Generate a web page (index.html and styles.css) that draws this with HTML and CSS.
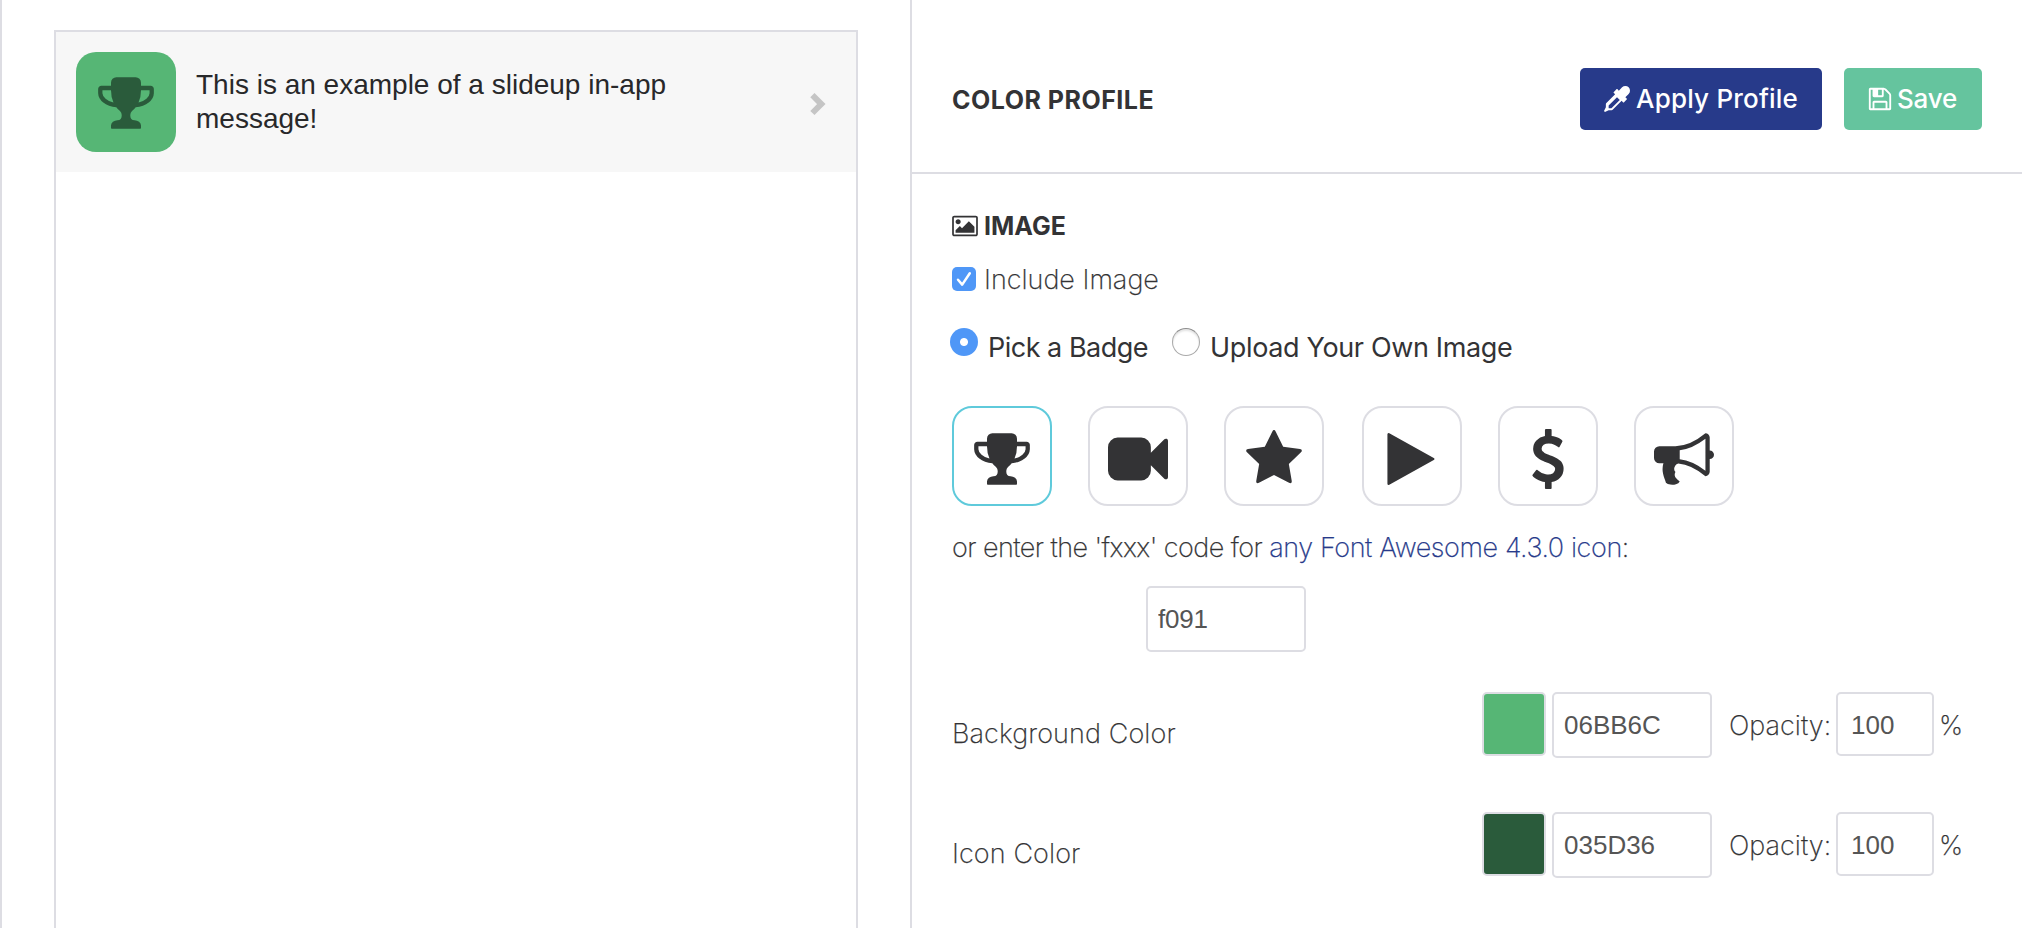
FILE: index.html
```html
<!DOCTYPE html>
<html lang="en">
<head>
<meta charset="utf-8">
<title>In-App Message Composer</title>
<link rel="stylesheet" href="styles.css">
</head>
<body>
<svg class="sprite" aria-hidden="true">
  <symbol id="trophy" viewBox="0 0 1792 1792"><path d="M522 883q-74-162-74-371h-256v96q0 78 94.500 162t235.500 113zm1078-275v-96h-256q0 209-74 371 141-29 235.500-113t94.500-162zm128-128v128q0 71-41.500 143t-112 130-173 97.500-215.500 44.500q-42 54-95 95-38 34-52.500 72.500t-14.500 89.500q0 54 30.500 91t97.500 37q75 0 133.500 45.500t58.500 114.500v64q0 14-9 23t-23 9h-832q-14 0-23-9t-9-23v-64q0-69 58.500-114.500t133.500-45.500q67 0 97.500-37t30.500-91q0-51-14.500-89.500t-52.500-72.500q-53-41-95-95-113-5-215.500-44.500t-173-97.500-112-130-41.500-143v-128q0-40 28-68t68-28h288v-96q0-66 47-113t113-47h576q66 0 113 47t47 113v96h288q40 0 68 28t28 68z"/></symbol>
</svg>
<div class="composer">
  <section class="preview">
    <div class="preview-frame">
      <div class="slideup">
        <div class="slideup-badge"><svg class="badge-icon"><use href="#trophy"/></svg></div>
        <p class="slideup-text">This is an example of a slideup in-app message!</p>
        <svg class="slideup-chevron" viewBox="0 0 18 26"><path d="M3.400 4.200 12.300 13.100 3.400 22"/></svg>
      </div>
    </div>
  </section>
  <section class="settings">
    <header class="profile">
      <h2 class="heading profile-title">COLOR PROFILE</h2>
      <button class="btn btn-apply" type="button">
        <svg class="btn-icon" viewBox="0 0 1792 1792"><path d="M1698 94q94 94 94 226.500t-94 225.500l-225 223 104 104q10 10 10 23t-10 23l-210 210q-10 10-23 10t-23-10l-105-105-603 603q-37 37-90 37h-203l-256 128-64-64 128-256v-203q0-53 37-90l603-603-105-105q-10-10-10-23t10-23l210-210q10-10 23-10t23 10l104 104 223-225q93-94 225.500-94t226.500 94zm-1186 1442l576-576-192-192-576 576v192h192z"/></svg>
        <span class="apply-label">Apply Profile</span>
      </button>
      <button class="btn btn-save" type="button">
        <svg class="btn-icon" viewBox="0 0 1792 1792"><path d="M512 1536h768v-384h-768v384zm896 0h128v-896q0-14-10-38.500t-20-34.500l-281-281q-10-10-34-20t-39-10v416q0 40-28 68t-68 28h-576q-40 0-68-28t-28-68v-416h-128v1280h128v-416q0-40 28-68t68-28h832q40 0 68 28t28 68v416zm-384-928v-320q0-13-9.500-22.500t-22.500-9.500h-192q-13 0-22.500 9.500t-9.500 22.500v320q0 13 9.500 22.500t22.500 9.500h192q13 0 22.500-9.500t9.500-22.500zm640 32v928q0 40-28 68t-68 28h-1344q-40 0-68-28t-28-68v-1344q0-40 28-68t68-28h928q40 0 88 20t76 48l280 280q28 28 48 76t20 88z"/></svg>
        <span class="save-label">Save</span>
      </button>
    </header>
    <div class="fields">
      <h3 class="heading image-title">
        <svg class="image-icon" viewBox="-64 0 1920 1792"><path d="M576 576q0 80-56 136t-136 56-136-56-56-136 56-136 136-56 136 56 56 136zm1024 384v448h-1408v-192l320-320 160 160 512-512zm96-704h-1600q-13 0-22.500 9.500t-9.500 22.500v1216q0 13 9.500 22.500t22.500 9.500h1600q13 0 22.500-9.500t9.500-22.500v-1216q0-13-9.500-22.500t-22.500-9.500zm160 32v1216q0 66-47 113t-113 47h-1600q-66 0-113-47t-47-113v-1216q0-66 47-113t113-47h1600q66 0 113 47t47 113z"/></svg>
        <span>IMAGE</span>
      </h3>
      <label class="check-row">
        <span class="checkbox"><svg viewBox="0 0 24 24"><path d="M6 12.800 10.200 17.600 17.800 6.200"/></svg></span>
        <span class="include-label">Include Image</span>
      </label>
      <div class="radio-row">
        <label class="radio-option"><span class="radio radio-on"></span><span class="pick-label">Pick a Badge</span></label>
        <label class="radio-option"><span class="radio"></span><span class="upload-label">Upload Your Own Image</span></label>
      </div>
      <div class="badges">
        <button class="badge badge-selected" type="button"><svg class="badge-icon"><use href="#trophy"/></svg></button>
        <button class="badge" type="button"><svg class="badge-icon" viewBox="0 0 1792 1792"><path d="M1792 352v1088q0 42-39 59-13 5-25 5-27 0-45-19l-403-403v166q0 119-84.500 203.500t-203.500 84.500h-704q-119 0-203.500-84.500t-84.500-203.500v-704q0-119 84.500-203.500t203.500-84.500h704q119 0 203.500 84.500t84.500 203.500v165l403-402q18-19 45-19 12 0 25 5 39 17 39 59z"/></svg></button>
        <button class="badge" type="button"><svg class="badge-icon" viewBox="0 0 1792 1792"><path d="M1728 647q0 22-26 48l-363 354 86 500q1 7 1 20 0 21-10.500 35.500t-30.500 14.500q-19 0-40-12l-449-236-449 236q-22 12-40 12-21 0-31.500-14.500t-10.500-35.500q0-6 2-20l86-500-364-354q-25-27-25-48 0-37 56-46l502-73 225-455q19-41 49-41t49 41l225 455 502 73q56 9 56 46z"/></svg></button>
        <button class="badge badge-play" type="button"><svg class="badge-icon" viewBox="0 0 1792 1792"><path d="M1576 927l-1328 738q-23 13-39.500 3t-16.500-36v-1472q0-26 16.500-36t39.500 3l1328 738q23 13 23 31t-23 31z"/></svg></button>
        <button class="badge" type="button"><svg class="badge-icon" viewBox="0 0 1792 1792"><path d="M1362 1185q0 153-99.500 263.500t-258.500 136.500v175q0 14-9 23t-23 9h-135q-13 0-22.500-9.500t-9.500-22.500v-175q-66-9-127.500-31t-101.500-44.500-74-48-46.500-37.500-17.500-18q-17-21-2-41l103-135q7-10 23-12 15-2 24 9l2 2q113 99 243 125 37 8 74 8 81 0 142.500-43t61.500-122q0-28-15-53t-33.500-42-58.500-37.500-66-32-80-32.500q-39-16-61.500-25t-61.500-26.500-62.500-31-56.500-35.500-53.500-42.500-43.500-49-35.500-58-21-66.500-8.500-78q0-138 98-242t255-134v-180q0-13 9.500-22.500t22.500-9.500h135q14 0 23 9t9 23v176q57 6 110.500 23t87 33.500 63.500 37.500 39 29 15 14q17 18 5 38l-81 146q-8 15-23 16-14 3-27-7-3-3-14.500-12t-39-26.500-58.500-32-74.500-26-85.500-11.500q-95 0-155 43t-60 111q0 26 8.500 48t29.500 41.500 39.500 33 56 31 60.500 27 70 27.500q53 20 81 31.500t76 35 75.500 42.500 62 50 53 63.500 31.500 76.500 13 94z"/></svg></button>
        <button class="badge" type="button"><svg class="badge-icon" viewBox="0 0 1792 1792"><path d="M1664 640q53 0 90.500 37.500t37.500 90.500-37.500 90.500-90.500 37.500v384q0 52-38 90t-90 38q-417-347-812-380-58 19-91 66t-31 100.500 40 92.500q-20 33-23 65.500t6 58 33.500 55 48 50 61.500 50.500q-29 58-111.500 83t-168.500 11.500-132-55.500q-7-23-29.500-87.500t-32-94.500-23-89-15-101 3.500-98.500 22-110.500h-122q-66 0-113-47t-47-113v-192q0-66 47-113t113-47h480q435 0 896-384 52 0 90 38t38 90v384zm-128 604v-954q-394 302-768 343v270q377 42 768 341z"/></svg></button>
      </div>
      <p class="code-hint"><span class="hint-lead">or enter the 'fxxx' code for </span><a class="hint-link" href="#">any Font Awesome 4.3.0 icon</a>:</p>
      <div class="code-row"><input class="text-input code-input" value="f091" aria-label="Icon code"></div>
      <div class="color-row">
        <span class="color-label">Background Color</span>
        <span class="swatch swatch-background"></span>
        <input class="text-input hex-input" value="06BB6C" aria-label="Background color">
        <span class="opacity-label">Opacity:</span>
        <input class="text-input opacity-input" value="100" aria-label="Background opacity">
        <span class="percent">%</span>
      </div>
      <div class="color-row">
        <span class="color-label">Icon Color</span>
        <span class="swatch swatch-icon"></span>
        <input class="text-input hex-input" value="035D36" aria-label="Icon color">
        <span class="opacity-label">Opacity:</span>
        <input class="text-input opacity-input" value="100" aria-label="Icon opacity">
        <span class="percent">%</span>
      </div>
    </div>
  </section>
</div>
</body>
</html>
```
FILE: styles.css
```css
* { box-sizing: border-box; }
body {
  margin: 0;
  background: #fff;
  color: #333335;
  font-family: Inter, "Liberation Sans", sans-serif;
  font-size: 27px;
  font-weight: 200;
  overflow: hidden;
}
h2, h3, p { margin: 0; }
button { font-family: inherit; padding: 0; }
.sprite { display: none; }

.composer {
  display: grid;
  grid-template-columns: 910px 1fr;
  height: 928px;
}
.preview {
  border-left: 2px solid #dddde3;
  padding: 30px 52px 0;
}
.preview-frame {
  height: 898px;
  border: 2px solid #dddde3;
  border-bottom: 0;
}
.slideup {
  display: flex;
  align-items: center;
  height: 140px;
  padding: 0 29px 0 20px;
  background: #f7f7f7;
}
.slideup-badge {
  display: flex;
  align-items: center;
  justify-content: center;
  width: 100px;
  height: 100px;
  border-radius: 20px;
  background: #56b675;
  color: #2a5b3b;
}
.badge-icon {
  width: 60px;
  height: 60px;
  fill: currentColor;
}
.slideup-badge .badge-icon { margin-top: 2px; }
.slideup-text {
  width: 520px;
  margin-left: 20px;
  color: #28282a;
  font: 400 28px/34px "Liberation Sans", Arial, sans-serif;
}
.slideup-chevron {
  width: 18px;
  height: 26px;
  margin: 3px 0 0 auto;
  fill: none;
  stroke: #c5c5c5;
  stroke-width: 6;
}

.settings { border-left: 2px solid #dddde3; }
.profile {
  display: flex;
  align-items: center;
  height: 174px;
  padding: 26px 40px 0 40px;
  border-bottom: 2px solid #dddde3;
}
.heading {
  font-size: 25px;
  font-weight: 700;
  line-height: 32px;
}
.profile-title {
  margin-right: auto;
  padding-top: 1px;
  letter-spacing: .5px;
}
.btn {
  display: flex;
  align-items: center;
  height: 62px;
  border: 0;
  border-radius: 5px;
  color: #fff;
  font-size: 26px;
  font-weight: 500;
  line-height: 32px;
}
.btn-icon {
  width: 26px;
  height: 26px;
  fill: currentColor;
}
.btn-apply {
  width: 242px;
  padding-left: 24px;
  background: #273a8a;
}
.btn-save {
  width: 138px;
  margin-left: 22px;
  padding-left: 23px;
  background: #65c49e;
}
.apply-label { margin-left: 6px; letter-spacing: .2px; }
.save-label { margin-left: 4px; letter-spacing: -.2px; }

.fields { padding: 36px 0 0 40px; }
.image-title {
  display: flex;
  align-items: center;
  height: 32px;
}
.image-icon {
  width: 26px;
  height: 24px;
  margin-right: 6px;
  fill: currentColor;
}
.check-row {
  display: flex;
  align-items: center;
  height: 34px;
  margin-top: 20px;
}
.checkbox {
  width: 24px;
  height: 24px;
  border-radius: 5px;
  background: #4f97f7;
}
.checkbox svg {
  display: block;
  fill: none;
  stroke: #fff;
  stroke-width: 2.500;
  stroke-linecap: round;
  stroke-linejoin: round;
}
.include-label,
.code-hint,
.color-label,
.opacity-label,
.percent { -webkit-text-stroke: .25px currentColor; }
.include-label { margin-left: 8px; }
.radio-row {
  display: flex;
  height: 38px;
  margin: 32px 0 0 -2px;
  font-weight: 400;
  line-height: 40px;
}
.radio-option { display: flex; }
.radio {
  width: 28px;
  height: 28px;
  margin-right: 10px;
  border: 1px solid #aaa;
  border-top-color: #8d8d8d;
  border-radius: 50%;
  box-shadow: inset 0 2px 2px #e4e4e4;
}
.radio-on {
  border: 0;
  background: radial-gradient(circle, #fff 3.500px, #4f97f7 4.500px);
  box-shadow: none;
}
.radio-option + .radio-option { margin-left: 24px; }
.pick-label { letter-spacing: -.5px; }
.upload-label { letter-spacing: -.35px; }
.badges {
  display: flex;
  gap: 36px;
  margin-top: 40px;
}
.badge {
  display: flex;
  align-items: center;
  justify-content: center;
  width: 100px;
  height: 100px;
  padding-top: 5px;
  border: 2px solid #dddde3;
  border-radius: 20px;
  background: #fff;
  color: #333335;
}
.badge-selected { border-color: #5fcadb; }
.badge-play {
  margin-left: 2px;
  padding-right: 2px;
}
.code-hint {
  height: 34px;
  margin-top: 25px;
  line-height: 34px;
  white-space: nowrap;
}
.hint-lead { white-space: pre; letter-spacing: -.56px; }
.hint-link {
  color: #273a8a;
  text-decoration: none;
  letter-spacing: -.4px;
}
.code-row {
  display: flex;
  height: 66px;
  margin: 21px 0 40px 194px;
}
.text-input {
  height: 66px;
  border: 2px solid #dddde3;
  border-radius: 5px;
  outline: 0;
  background: #fff;
  color: #555;
  font: 400 26px "Liberation Sans", Arial, sans-serif;
  padding: 0 0 0 10px;
}
.code-input { width: 160px; letter-spacing: -.2px; }
.color-row {
  display: flex;
  height: 66px;
  margin-bottom: 54px;
}
.color-label {
  width: 530px;
  padding-top: 25px;
  line-height: 34px;
  letter-spacing: .1px;
}
.swatch {
  width: 64px;
  height: 64px;
  margin-right: 6px;
  border: 2px solid #dddde3;
  border-radius: 5px;
}
.swatch-background { background: #56b675; }
.swatch-icon { background: #2a5b3b; }
.hex-input { width: 160px; }
.opacity-label {
  width: 124px;
  padding: 17px 0 0 17px;
  line-height: 34px;
}
.opacity-input {
  width: 98px;
  height: 64px;
  padding: 2px 0 0 13px;
}
.percent {
  padding: 17px 0 0 5px;
  line-height: 34px;
}
```
